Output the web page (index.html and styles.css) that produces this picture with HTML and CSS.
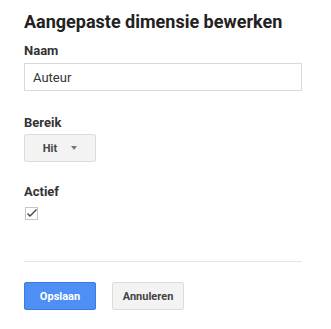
FILE: index.html
```html
<!DOCTYPE html>
<html lang="nl">
<head>
  <meta charset="UTF-8" />
  <meta name="viewport" content="width=device-width, initial-scale=1.0"/>
  <title>Aangepaste dimensie bewerken</title>
  <link rel="stylesheet" href="styles.css">
</head>
<body>

  <!-- dialoog -->
  <div class="dialog">
    <h2 class="dialog-title">Aangepaste dimensie bewerken</h2>

    <label class="field-label" for="naam">Naam</label>
    <input type="text" id="naam" class="text-input" value="Auteur">

    <div class="field-label label-bereik">Bereik</div>
    <button class="dropdown">
      <span>Hit</span>
      <span class="arrow"></span>
    </button>

    <div class="field-label label-actief">Actief</div>
    <span class="checkbox">
      <svg width="13" height="13" viewBox="0 0 13 13">
        <path d="M2.5 6.5 L5 9 L11.5 2.5" fill="none" stroke="#444" stroke-width="1.4"/>
      </svg>
    </span>

    <hr class="divider">

    <div class="actions">
      <button class="btn btn-primary">Opslaan</button>
      <button class="btn">Annuleren</button>
    </div>
  </div>

</body>
</html>
```

FILE: styles.css
```css
body {
  margin: 0;
  padding: 0;
  font-family: Roboto, "Liberation Sans", Arial, sans-serif;
  background: #fff;
  color: #222;
}

.dialog {
  width: 278px;
  padding: 10px 24px 0 24px;
}

.dialog-title {
  margin: 0;
  font-size: 18px;
  line-height: 24px;
  font-weight: bold;
  color: #222;
}

.field-label {
  display: block;
  margin-top: 9px;
  font-size: 13px;
  line-height: 16px;
  font-weight: bold;
  color: #333;
}

.text-input {
  display: block;
  box-sizing: border-box;
  width: 278px;
  height: 28px;
  margin-top: 4px;
  padding: 0 8px;
  border: 1px solid #d9d9d9;
  font-family: inherit;
  font-size: 13px;
  color: #333;
  outline: none;
}

.label-bereik {
  margin-top: 24px;
}

.label-actief {
  margin-top: 22px;
}

.dropdown {
  display: flex;
  align-items: center;
  justify-content: center;
  gap: 14px;
  box-sizing: border-box;
  width: 72px;
  height: 28px;
  margin-top: 3px;
  padding: 0;
  background: #f3f3f3;
  border: 1px solid #dcdcdc;
  border-radius: 2px;
  font-family: inherit;
  font-size: 11px;
  font-weight: bold;
  color: #444;
}

.arrow {
  width: 0;
  height: 0;
  border-left: 3px solid transparent;
  border-right: 3px solid transparent;
  border-top: 4px solid #777;
}

.checkbox {
  display: block;
  box-sizing: border-box;
  width: 13px;
  height: 13px;
  margin: 7px 0 0 1px;
  border: 1px solid #c6c6c6;
  position: relative;
}

.checkbox svg {
  position: absolute;
  left: -1px;
  top: -1px;
}

.divider {
  margin: 41px 0 0 0;
  border: none;
  border-top: 1px solid #e5e5e5;
  height: 0;
}

.actions {
  display: flex;
  gap: 16px;
  margin-top: 20px;
}

.btn {
  box-sizing: border-box;
  width: 72px;
  height: 28px;
  padding: 0;
  background: #f3f3f3;
  border: 1px solid #dcdcdc;
  border-radius: 2px;
  font-family: inherit;
  font-size: 11px;
  font-weight: bold;
  color: #444;
}

.btn-primary {
  background: #4d8ff5;
  border-color: #3d7ae0;
  color: #fff;
}
```
